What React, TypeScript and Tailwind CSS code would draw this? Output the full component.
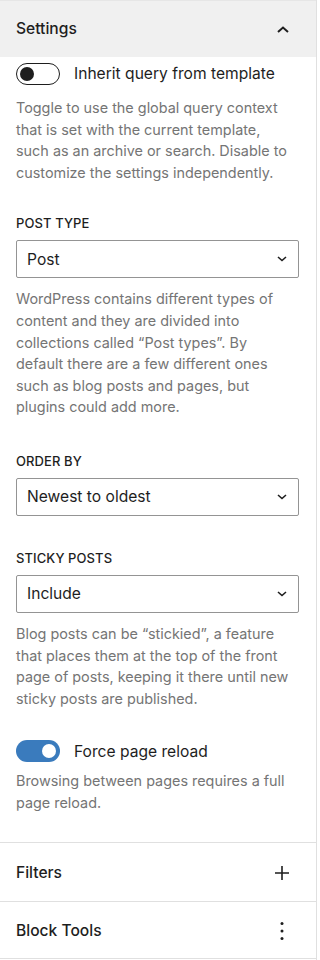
function Toggle({ on }: { on: boolean }) {
  return on ? (
    <span className="relative inline-block w-[44px] h-[22px] rounded-full bg-[#3a7bbd] shrink-0">
      <span className="absolute right-[4px] top-[4px] w-[14px] h-[14px] rounded-full bg-white" />
    </span>
  ) : (
    <span className="relative inline-block w-[44px] h-[22px] rounded-full border border-[#1e1e1e] bg-white shrink-0">
      <span className="absolute left-[3px] top-[3px] w-[14px] h-[14px] rounded-full bg-[#1e1e1e]" />
    </span>
  );
}

function Chevron() {
  return (
    <svg width="12" height="8" viewBox="0 0 12 8" className="shrink-0">
      <path d="M2 2 L6 5.5 L10 2" fill="none" stroke="#1e1e1e" strokeWidth="1.6" />
    </svg>
  );
}

function SelectField({ label, value, top }: { label: string; value: string; top: string }) {
  return (
    <div className={top}>
      <div className="text-[13px] font-medium uppercase leading-[18px] text-[#1e1e1e] tracking-[0.1px]">
        {label}
      </div>
      <div className="mt-[8px] h-[38px] w-[283px] border border-[#949494] rounded-[2px] flex items-center justify-between pl-[10px] pr-[10px]">
        <span className="text-[15.6px] text-[#1e1e1e]">{value}</span>
        <Chevron />
      </div>
    </div>
  );
}

function Help({ children, top }: { children: React.ReactNode; top: string }) {
  return (
    <p className={`${top} w-[281px] text-[14.4px] leading-[21.6px] text-[#757575]`}>{children}</p>
  );
}

export default function App() {
  return (
    <div
      className="w-[317px] h-[960px] bg-white border-r border-[#e0e0e0] text-[#1e1e1e]"
      style={{ fontFamily: "Inter, 'Noto Sans', sans-serif" }}
    >
      <div className="h-[57px] bg-[#f0f0f0] border-t border-[#e6e6e6] flex items-center justify-between pl-[16px] pr-[26px]">
        <span className="text-[15.6px] font-medium">Settings</span>
        <svg width="14" height="9" viewBox="0 0 14 9">
          <path d="M2 7 L7 2.5 L12 7" fill="none" stroke="#1e1e1e" strokeWidth="2" />
        </svg>
      </div>

      <div className="px-[16px] pb-[28px]">
        <div className="mt-[6px] flex items-center gap-[14px] h-[22px]">
          <Toggle on={false} />
          <span className="text-[15.6px]">Inherit query from template</span>
        </div>
        <Help top="mt-[12px]">
          Toggle to use the global query context that is set with the current template, such as an archive or
          search. Disable to customize the settings independently.
        </Help>

        <SelectField label="Post type" value="Post" top="mt-[31px]" />
        <Help top="mt-[10px]">
          WordPress contains different types of content and they are divided into collections called “Post types”.
          By default there are a few different ones such as blog posts and pages, but plugins could add more.
        </Help>

        <SelectField label="Order by" value="Newest to oldest" top="mt-[34px]" />

        <SelectField label="Sticky posts" value="Include" top="mt-[33px]" />
        <Help top="mt-[10px]">
          Blog posts can be “stickied”, a feature that places them at the top of the front page of posts, keeping
          it there until new sticky posts are published.
        </Help>

        <div className="mt-[31px] flex items-center gap-[14px] h-[22px]">
          <Toggle on={true} />
          <span className="text-[15.6px]">Force page reload</span>
        </div>
        <Help top="mt-[8px]">Browsing between pages requires a full page reload.</Help>
      </div>

      <div className="border-t border-[#e0e0e0] h-[59px] flex items-center justify-between pl-[16px] pr-[26px] pt-[2px]">
        <span className="text-[15.6px] font-medium">Filters</span>
        <svg width="16" height="16" viewBox="0 0 16 16">
          <path d="M8 1 V15 M1 8 H15" fill="none" stroke="#1e1e1e" strokeWidth="1.6" />
        </svg>
      </div>
      <div className="border-t border-b border-[#e0e0e0] h-[58px] flex items-center justify-between pl-[16px] pr-[32px] pt-[2px]">
        <span className="text-[15.6px] font-medium">Block Tools</span>
        <svg width="4" height="20" viewBox="0 0 4 20">
          <circle cx="2" cy="2.5" r="1.5" fill="#1e1e1e" />
          <circle cx="2" cy="10" r="1.5" fill="#1e1e1e" />
          <circle cx="2" cy="17.5" r="1.5" fill="#1e1e1e" />
        </svg>
      </div>
    </div>
  );
}
